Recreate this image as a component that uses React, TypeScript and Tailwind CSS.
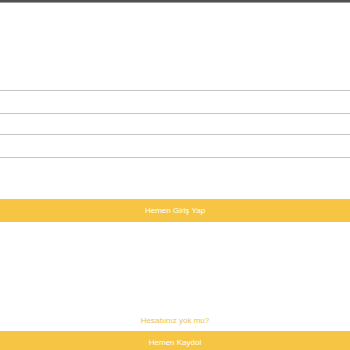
import React from "react";

export default function App() {
  return (
    <div
      className="w-[350px] h-[350px] overflow-hidden bg-white flex flex-col"
      style={{ fontFamily: "'Liberation Sans', Arial, sans-serif" }}
    >
      {/* top status strip */}
      <div className="h-[2px] shrink-0 bg-[#505050]" />
      <div className="h-px shrink-0 bg-[#a0a0a0]" />

      {/* input fields */}
      <div className="mt-[87px] shrink-0 flex flex-col gap-[20px]">
        <input
          className="h-[24px] shrink-0 w-full border-y border-[#c4c4c4] outline-none px-2 text-[9px]"
          aria-label="E-posta"
        />
        <input
          type="password"
          className="h-[24px] shrink-0 w-full border-y border-[#c4c4c4] outline-none px-2 text-[9px]"
          aria-label="Şifre"
        />
      </div>

      <button className="mt-[41px] h-[23px] shrink-0 w-full bg-[#f6c544] text-white text-[8px] font-medium flex items-center justify-center">
        Hemen Giriş Yap
      </button>

      <div className="mt-[94px] shrink-0 text-center text-[8px] leading-[10px] text-[#f0c24a]">
        Hesabınız yok mu?
      </div>

      <button className="mt-[5px] h-[23px] w-full shrink-0 bg-[#f6c544] text-white text-[8px] font-medium flex items-center justify-center">
        Hemen Kaydol
      </button>
    </div>
  );
}
